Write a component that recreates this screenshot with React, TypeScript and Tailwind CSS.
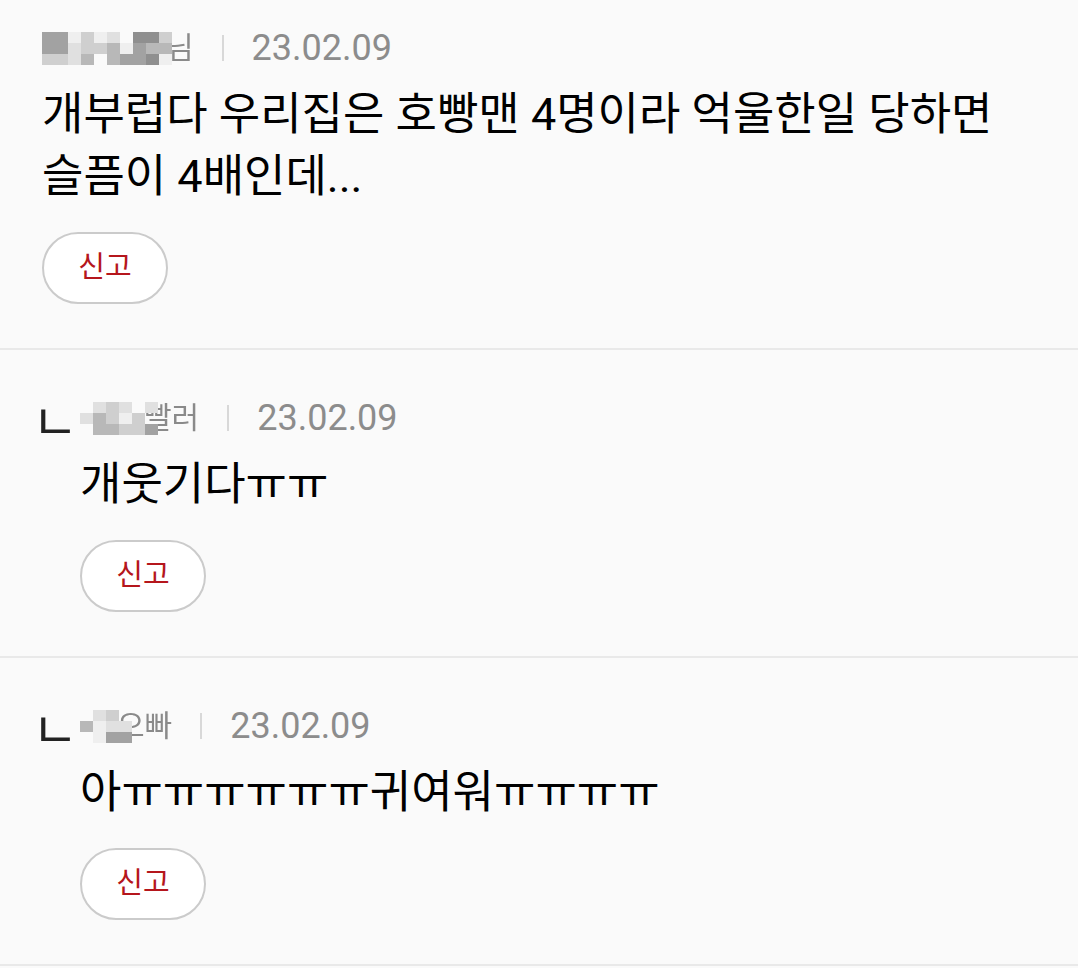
import React from 'react';

const SHADES: Record<string, string> = {
  '.': 'transparent',
  '1': '#efefef',
  '2': '#e0e0e0',
  '3': '#cfcfcf',
  '4': '#b8b8b8',
  '5': '#a2a2a2',
  '6': '#8f8f8f',
};

function Mosaic({ rows }: { rows: string[] }) {
  return (
    <div className="relative z-10 flex flex-col blur-[0.6px]">
      {rows.map((row, r) => (
        <div key={r} className="flex">
          {row.split('').map((c, i) => (
            <div key={i} className="w-[13px] h-[11px]" style={{ background: SHADES[c] }} />
          ))}
        </div>
      ))}
    </div>
  );
}

type Comment = {
  reply: boolean;
  mosaic: string[];
  tail: string;
  tailShift: string;
  date: string;
  lines: string[];
};

const COMMENTS: Comment[] = [
  {
    reply: false,
    mosaic: ['551312.663', '5523341544', '3324.45561'],
    tail: '님',
    tailShift: '-ml-[6px]',
    date: '23.02.09',
    lines: ['개부럽다 우리집은 호빵맨 4명이라 억울한일 당하면', '슬픔이 4배인데...'],
  },
  {
    reply: true,
    mosaic: ['.232.2', '24313.', '.44335'],
    tail: '빨러',
    tailShift: '-ml-[14px]',
    date: '23.02.09',
    lines: ['개웃기다ㅠㅠ'],
  },
  {
    reply: true,
    mosaic: ['.23.', '4122', '.155'],
    tail: '오빠',
    tailShift: '-ml-[15px]',
    date: '23.02.09',
    lines: ['아ㅠㅠㅠㅠㅠㅠ귀여워ㅠㅠㅠㅠ'],
  },
];

function Header({ c }: { c: Comment }) {
  return (
    <div className="flex items-center h-[48px] gap-7">
      <div className="flex items-center">
        <Mosaic rows={c.mosaic} />
        <span className={`text-[30px] text-[#8a8a8a] leading-none blur-[0.3px] ${c.tailShift}`}>{c.tail}</span>
      </div>
      <div className="w-[2px] h-[26px] bg-[#d8d8d8]" />
      <span className="text-[36px] text-[#8c8c8c] leading-none">{c.date}</span>
    </div>
  );
}

function Body({ c }: { c: Comment }) {
  return (
    <div className="flex flex-col">
      <div className="mt-3 text-[45px] leading-[62px] text-black">
        {c.lines.map((l, i) => (
          <div key={i}>{l}</div>
        ))}
      </div>
      <button className="mt-6 w-[126px] h-[72px] rounded-full border-2 border-[#cbcbcb] bg-white text-[29px] text-[#b5161c] flex items-center justify-center">
        신고
      </button>
    </div>
  );
}

export default function App() {
  return (
    <div
      className="w-[1078px] h-[968px] overflow-hidden bg-[#fafafa]"
      style={{ fontFamily: 'Roboto, "Noto Sans CJK KR", sans-serif' }}
    >
      {COMMENTS.map((c, i) => (
        <div
          key={i}
          className={`border-b-2 border-[#e9e9e9] pb-[44px] ${i === 0 ? 'pt-[24px]' : 'pt-[44px]'} ${c.reply ? 'pl-[40px] flex' : 'pl-[42px]'}`}
        >
          {c.reply && (
            <div className="w-[48px] h-[48px] flex items-center -ml-[8px]">
              <span className="text-[50px] text-[#222] leading-none mt-[10px]">ㄴ</span>
            </div>
          )}
          <div>
            <Header c={c} />
            <Body c={c} />
          </div>
        </div>
      ))}
    </div>
  );
}
